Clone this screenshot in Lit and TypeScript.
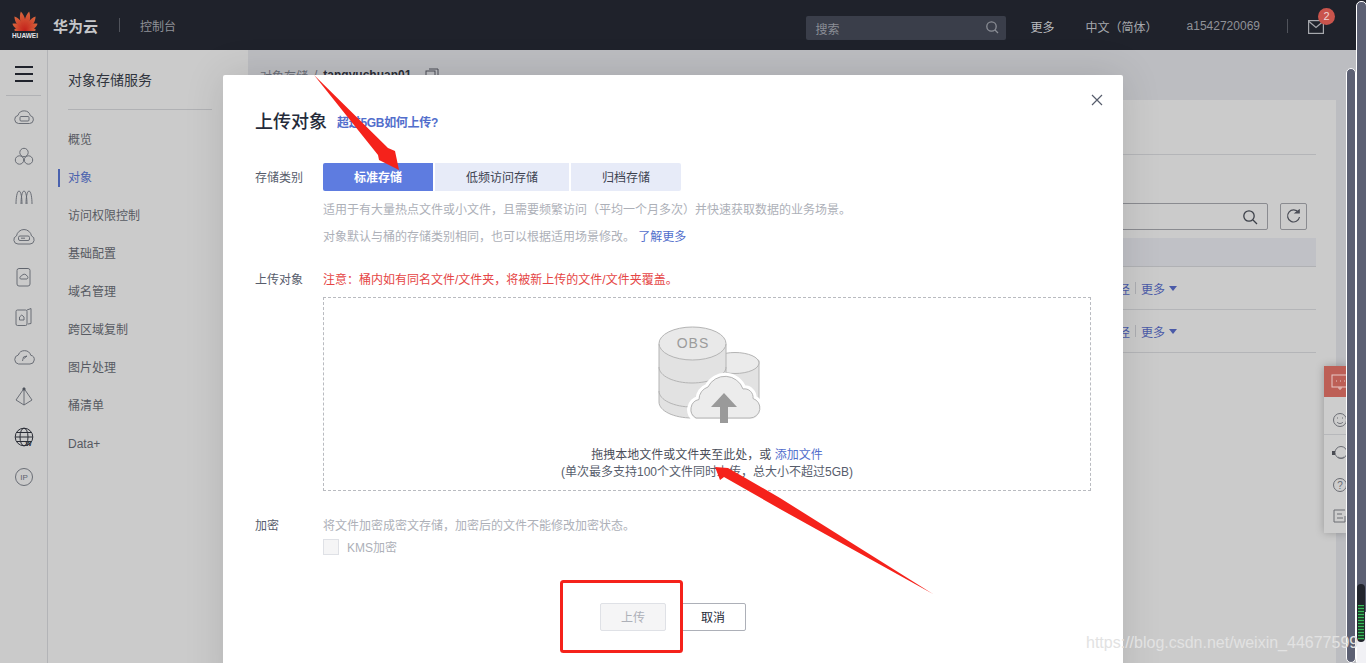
import { LitElement, html, css, svg } from "lit";
import { customElement } from "lit/decorators.js";

const petalAngles = [-84, -60, -36, -12, 12, 36, 60, 84];
const petalLens = [11, 14.5, 18, 20, 20, 18, 14.5, 11];

const railIcons = [
  svg`<path d="M6.500 18.500h11a4 4 0 0 0 .8-7.900 6.400 6.400 0 0 0-12.300-.2A4.100 4.100 0 0 0 6.500 18.500z"/><rect x="8" y="11.500" width="9" height="4.500" rx="1"/>`,
  svg`<circle cx="12" cy="7.500" r="4.200"/><circle cx="7.500" cy="15" r="4.200"/><circle cx="16.500" cy="15" r="4.200"/>`,
  svg`<path d="M4 19c0-6 1-13 3-13s3 7 3 13M9 19c0-6 1-13 3-13s3 7 3 13M14 19c0-6 1-13 3-13s3 7 3 13"/>`,
  svg`<path d="M6 19h12a4.200 4.200 0 0 0 1.500-8.100A7.600 7.600 0 0 0 4.500 10.900 4.200 4.200 0 0 0 6 19z"/><rect x="6.500" y="11" width="11" height="4.500" rx="1.500"/><path d="M9 13.200h4"/>`,
  svg`<rect x="5" y="3.500" width="13" height="17.500" rx="2"/><path d="M7.500 3.500h8M8.500 14h6.500a1.700 1.700 0 0 0 0-3 3 3 0 0 0-5.500 0 1.700 1.700 0 0 0-1 3z"/>`,
  svg`<path d="M15 5l4-1.500v15L16 19"/><rect x="4" y="5" width="11" height="15.500" rx="1.500"/><path d="M7.500 15h4.500v-3l-2.200-2-2.300 2z"/>`,
  svg`<path d="M6.500 19h11.500a4.400 4.400 0 0 0 .8-8.700 6.600 6.600 0 0 0-12.500-.3A4.600 4.600 0 0 0 6.500 19z"/><path d="M10.500 16l1-4 3.500-1-3 2.500"/>`,
  svg`<path d="M12 3.500L4 15l8 5 8-5zM12 3.500v16.500"/><circle cx="12" cy="4" r="1.200" fill="#33363f"/>`,
  svg`<g class="dark"><circle cx="12" cy="12" r="8.800"/><ellipse cx="12" cy="12" rx="4" ry="8.800"/><path d="M3.200 12h17.600M4.500 7.500h15M4.500 16.500h15"/></g><text class="w" x="16.500" y="21">W</text>`,
  svg`<circle cx="12" cy="12" r="8.500"/><text class="ip" x="12" y="15">IP</text>`,
];

const navItems = ["概览", "对象", "访问权限控制", "基础配置", "域名管理", "跨区域复制", "图片处理", "桶清单", "Data+"];

@customElement("app-root")
export class AppRoot extends LitElement {
  static styles = css`
    :host {
      display: block;
      position: relative;
      width: 1366px;
      height: 663px;
      overflow: hidden;
      font-family: "Liberation Sans", "Noto Sans CJK SC", sans-serif;
      font-size: 12px;
      color: #575d6c;
      background: #bcbdc1;
    }
    .top {
      height: 50px;
      background: #1f222b;
      display: flex;
      align-items: center;
      color: #b4b6bb;
    }
    .logo { display: flex; flex-direction: column; align-items: center; width: 26px; margin-left: 12px; margin-top: 1px; }
    .logo svg { display: block; }
    .logo span { font-size: 6.500px; line-height: 8px; color: #e4e4e6; font-weight: 700; margin-top: 1px; }
    .brand { margin-left: 15px; font-size: 15px; font-weight: 700; color: #c6c7ca; }
    .sep { width: 1px; height: 14px; background: #50535b; }
    .brand + .sep { margin-left: 21px; }
    .console { margin-left: 20px; color: #8f9197; }
    .grow { flex: 1; }
    .search {
      width: 200px; height: 24px; box-sizing: border-box; border-radius: 2px; background: #3a3e4a;
      display: flex; align-items: center; justify-content: space-between; padding: 0 7px 0 10px;
      color: #8b8e96; margin-top: 6px;
    }
    .search svg { margin-top: -3px; }
    .tn { margin-top: 2px; }
    .more { margin-left: 25px; color: #b9bbbf; }
    .lang { margin-left: 31px; color: #a6a8ad; }
    .user { margin-left: 29px; color: #8f9197; font-size: 12px; }
    .top .user + .sep { margin-left: 27px; }
    .mail { position: relative; margin: 0 42px 0 20px; width: 16px; height: 14px; margin-top: 3px; }
    .mail svg { display: block; }
    .badge {
      position: absolute; left: 10px; top: -12px; width: 17px; height: 17px; border-radius: 50%; background: #c9544c;
      color: #f0d6d4; font-size: 11px; line-height: 17px; text-align: center;
    }
    .body { display: flex; height: 613px; }
    .rail { width: 47px; border-right: 1px solid #b3b4b7; background: #cacaca; flex: none; padding-top: 10px; box-sizing: content-box; }
    .burger { display: flex; flex-direction: column; gap: 5px; width: 18px; margin: 6px auto 13px; }
    .burger i { display: block; height: 2px; background: #20232c; }
    .rail hr { margin: 0 6px 1px; border: 0; border-top: 1px solid #b0b1b4; }
    .ri { height: 40px; display: flex; align-items: center; justify-content: center; }
    .ri svg { fill: none; stroke: #5f636c; stroke-width: 0.900; width: 24px; height: 24px; }
    .ri .dark { stroke: #2b2e37; stroke-width: 1; }
    .ri text { stroke: none; text-anchor: middle; font-size: 8px; fill: #5f636c; }
    .ri text.w { font-size: 6.500px; font-weight: 700; fill: #2b2e37; }
    .side { width: 200px; flex: none; background: #cbcbcb; padding-left: 20px; box-sizing: border-box; }
    .side h2 { margin: 0; font-size: 14px; font-weight: 400; line-height: 20px; padding-top: 20px; color: #30343d; }
    .side hr { margin: 19px 36px 11px 0; border: 0; border-top: 1px solid #b0b1b4; }
    .nav { height: 38px; line-height: 38px; position: relative; color: #575a62; }
    .nav.on { color: #4a62ae; }
    .nav.on::before { content: ""; position: absolute; left: -10px; top: 10px; width: 2px; height: 18px; background: #4a62ae; }
    .main { flex: 1; min-width: 0; padding: 0 30px 0 12px; }
    .crumb { height: 50px; display: flex; align-items: center; color: #6a6d77; gap: 6px; }
    .crumb b { color: #2b2e37; }
    .crumb svg { margin-left: 8px; }
    .card { background: #cbcbcb; height: 563px; padding: 0 20px 0 0; box-sizing: border-box; }
    .tabs { height: 55px; border-bottom: 1px solid #b4b5b8; box-sizing: border-box; }
    .tools { display: flex; justify-content: flex-end; align-items: center; gap: 12px; margin-top: 48px; padding-right: 9px; }
    .find { width: 300px; height: 27px; border: 1px solid #8a8b90; border-radius: 2px; box-sizing: border-box; display: flex; align-items: center; justify-content: flex-end; padding-right: 9px; }
    .ref { width: 27px; height: 27px; border: 1px solid #8a8b90; border-radius: 2px; box-sizing: border-box; display: flex; align-items: center; justify-content: center; }
    .thead { height: 29px; margin-top: 8px; background: #c0c1c6; border-bottom: 1px solid #b0b1b4; box-sizing: border-box; }
    .row { height: 43px; border-bottom: 1px solid #b4b5b8; box-sizing: border-box; display: flex; align-items: center; justify-content: flex-end; padding-right: 139px; color: #4a5aa8; }
    .row s { text-decoration: none; width: 1px; height: 12px; background: #adaeb2; margin: 0 5px; }
    .row i { width: 0; height: 0; border: 4px solid transparent; border-top: 5px solid #4a5aa8; border-bottom: 0; margin-left: 4px; }
    .modal {
      position: absolute; left: 223px; top: 75px; width: 900px; height: 620px; background: #fff; border-radius: 2px;
      box-shadow: 0 0 40px rgba(0, 0, 0, 0.12); box-sizing: border-box; padding: 0 32px;
    }
    .close { position: absolute; right: 20px; top: 19px; display: block; }
    .mh { display: flex; align-items: center; height: 88px; box-sizing: border-box; padding-top: 2px; gap: 10px; }
    .mh h1 { margin: 0; font-size: 18px; font-weight: 500; color: #252b3a; }
    .mh a { color: #526ecc; font-weight: 700; margin-top: 2px; letter-spacing: -0.3px; }
    a { color: #526ecc; }
    .f { display: flex; }
    .l { width: 68px; flex: none; color: #575d6c; }
    .c { flex: 1; min-width: 0; }
    .f1 .l { line-height: 30px; height: 28px; }
    .segs { display: flex; gap: 2px; }
    .seg { height: 28px; line-height: 30px; text-align: center; background: #e7ebf8; color: #3d4250; width: 134px; }
    .seg.a { width: 110px; background: #5e7ce0; color: #fff; font-weight: 700; border-radius: 2px 0 0 2px; }
    .seg.z { width: 110px; border-radius: 0 2px 2px 0; }
    .d { color: #adb0b8; line-height: 18px; margin-top: 10px; }
    .d.two { margin-top: 9px; }
    .f2 { margin-top: 25px; }
    .f2 .l { line-height: 18px; }
    .warn { color: #e54545; line-height: 18px; }
    .drop { margin-top: 8px; width: 768px; height: 194px; box-sizing: border-box; border: 1px dashed #b9bbc0; text-align: center; padding-top: 23px; }
    .drop svg { display: block; margin: 0 auto; }
    .drop p { margin: 0; line-height: 17px; color: #4a4e59; }
    .drop p:first-of-type { margin-top: 20px; }
    .drop p + p { color: #575d6c; }
    .f3 { margin-top: 26px; }
    .f3 .l { line-height: 18px; }
    .f3 .d { margin-top: 0; }
    .kms { display: flex; align-items: center; gap: 8px; margin-top: 3px; color: #adb0b8; }
    .kms i { width: 16px; height: 16px; box-sizing: border-box; border: 1px solid #dfe1e6; background: #f5f5f6; }
    .foot { display: flex; gap: 14px; margin-top: 48px; padding-left: 345px; }
    .btn { width: 66px; height: 28px; box-sizing: border-box; border-radius: 2px; text-align: center; line-height: 28px; border: 1px solid #adb0b8; color: #252b3a; }
    .btn.off { background: #f5f5f6; border-color: #dfe1e6; color: #adb0b8; }
    .ink { position: absolute; left: 0; top: 0; pointer-events: none; }
    .fb { position: absolute; left: 1324px; top: 366px; width: 24px; height: 167px; background: #cdcdcd; box-shadow: 0 0 8px rgba(0, 0, 0, 0.25); overflow: hidden; }
    .fb .red { height: 31px; background: #bd5f56; display: flex; align-items: center; padding-left: 7px; }
    .fb .i { display: flex; align-items: center; padding-left: 8px; box-sizing: border-box; }
    .fb .smile { height: 38px; padding-top: 8px; border-bottom: 1px solid #b7b8bb; }
    .fb .head { height: 36px; }
    .fb .help { height: 28px; }
    .fb .note { height: 34px; }
    .fb svg { flex: none; fill: none; stroke: #6a6c73; stroke-width: 1; }
    .fb .red svg { stroke: #e8c9c5; }
    .fb .blob { fill: #4a4c53; stroke: none; }
    .fb text { stroke: none; fill: #6a6c73; font-size: 10px; text-anchor: middle; }
    .bar { position: absolute; background: #5c6073; box-sizing: border-box; border: 1px solid #fff; }
    .b1 { left: 1346px; width: 10px; top: 68px; height: 595px; border-radius: 5px; }
    .b2 { left: 1356px; width: 11px; top: 1px; height: 662px; border-radius: 5px 5px 0 0; }
    .b2top { position: absolute; left: 1357px; top: 612px; width: 9px; height: 51px; background: #f1f1f5; }
    .thumb { position: absolute; left: 1357px; top: 584px; width: 8px; height: 58px; border-radius: 4px; background: #22252d; overflow: hidden; }
    .thumb i {
      position: absolute; left: 1px; right: 1px; top: 21px; height: 35px;
      background: repeating-linear-gradient(#38b95c 0 1px, #1f4a2c 1px 3px);
    }
    .wm { position: absolute; left: 1086px; top: 634px; font-size: 16px; line-height: 18px; color: #e2e2e2; white-space: nowrap; }
  `;

  render() {
    return html`
      <div class="top">
        <div class="logo">
          <svg width="26" height="20" viewBox="-13 -20 26 20">
            <defs>
              <linearGradient id="pt" x1="0" y1="1" x2="0" y2="0"><stop offset="0" stop-color="#c4201a" /><stop offset="1" stop-color="#d9683e" /></linearGradient>
            </defs>
            ${petalAngles.map(
              (a, i) => svg`<path fill="url(#pt)" transform="rotate(${a})" d="M0 0C-3.600 -${petalLens[i] * 0.35} -3.200 -${petalLens[i] * 0.75} 0 -${petalLens[i]}C3.200 -${petalLens[i] * 0.75} 3.600 -${petalLens[i] * 0.35} 0 0z" />`,
            )}
          </svg>
          <span>HUAWEI</span>
        </div>
        <div class="brand">华为云</div>
        <div class="sep"></div>
        <div class="console">控制台</div>
        <div class="grow"></div>
        <div class="search">
          <span>搜索</span>
          <svg width="14" height="14" viewBox="0 0 14 14" fill="none" stroke="#8b8e96" stroke-width="1.300"><circle cx="6.500" cy="6.500" r="4.700" /><path d="M10 10l3 3" /></svg>
        </div>
        <div class="more tn">更多</div>
        <div class="lang tn">中文（简体）</div>
        <div class="user tn">a1542720069</div>
        <div class="sep tn"></div>
        <div class="mail">
          <svg width="16" height="14" viewBox="0 0 16 14" fill="none" stroke="#a6a8ad" stroke-width="1.200"><rect x="0.600" y="0.600" width="14.800" height="12.800" /><path d="M1 1.500l7 6 7-6" /></svg>
          <span class="badge">2</span>
        </div>
      </div>
      <div class="body">
        <div class="rail">
          <div class="burger"><i></i><i></i><i></i></div>
          <hr />
          ${railIcons.map((ic) => html`<div class="ri"><svg viewBox="0 0 24 24">${ic}</svg></div>`)}
        </div>
        <div class="side">
          <h2>对象存储服务</h2>
          <hr />
          ${navItems.map((n, i) => html`<div class="nav ${i === 1 ? "on" : ""}">${n}</div>`)}
        </div>
        <div class="main">
          <div class="crumb">
            <span>对象存储</span><span>/</span><b>tangyuchuan01</b>
            <svg width="14" height="14" viewBox="0 0 14 14" fill="none" stroke="#4a4d56"><rect x="1" y="3" width="9" height="10" /><path d="M4 1h9v9" /></svg>
          </div>
          <div class="card">
            <div class="tabs"></div>
            <div class="tools">
              <div class="find">
                <svg width="16" height="16" viewBox="0 0 16 16" fill="none" stroke="#3c4049" stroke-width="1.300"><circle cx="7" cy="7" r="5.200" /><path d="M11 11l4 4" /></svg>
              </div>
              <div class="ref">
                <svg width="15" height="15" viewBox="0 0 15 15" fill="none" stroke="#4a4d56" stroke-width="1.200"><path d="M12.500 3.500A6 6 0 1 0 13.500 8" /><path d="M9.500 3.800h3.700V1z" fill="#4a4d56" /></svg>
              </div>
            </div>
            <div class="thead"></div>
            <div class="row"><span>路径</span><s></s><span>更多</span><i></i></div>
            <div class="row"><span>路径</span><s></s><span>更多</span><i></i></div>
          </div>
        </div>
      </div>

      <div class="modal">
        <svg class="close" width="12" height="12" viewBox="0 0 12 12" stroke="#575d6c" stroke-width="1.200"><path d="M1 1l10 10M11 1L1 11" /></svg>
        <div class="mh"><h1>上传对象</h1><a>超过5GB如何上传?</a></div>
        <div class="f f1">
          <div class="l">存储类别</div>
          <div class="c">
            <div class="segs">
              <div class="seg a">标准存储</div>
              <div class="seg">低频访问存储</div>
              <div class="seg z">归档存储</div>
            </div>
            <div class="d">适用于有大量热点文件或小文件，且需要频繁访问（平均一个月多次）并快速获取数据的业务场景。</div>
            <div class="d two">对象默认与桶的存储类别相同，也可以根据适用场景修改。 <a>了解更多</a></div>
          </div>
        </div>
        <div class="f f2">
          <div class="l">上传对象</div>
          <div class="c">
            <div class="warn">注意：桶内如有同名文件/文件夹，将被新上传的文件/文件夹覆盖。</div>
            <div class="drop">
              <svg width="114" height="106" viewBox="650 321 114 106">
                <g fill="#e2e2e2" stroke="#b4b4b4" stroke-width="1">
                  <path d="M712 365v-4c0-5 47-5 47 0v42c0 8-20 12-47 10z" />
                  <ellipse cx="735" cy="363" rx="24" ry="10.500" fill="#ebebeb" />
                  <path d="M659 344v58c0 9 15 16 33 16s34-7 34-16v-58z" />
                  <path d="M659 367c0 9 15 16 33 16s34-7 34-16M659 391c0 9 15 16 33 16s34-7 34-16" fill="none" />
                  <ellipse cx="692.500" cy="343.500" rx="33.500" ry="16.500" fill="#e9e9e9" />
                </g>
                <text x="693" y="348" text-anchor="middle" font-size="14" font-weight="400" letter-spacing="1" fill="#9c9c9c" font-family="Liberation Sans, sans-serif">OBS</text>
                <path d="M696 419h54a10.500 10.500 0 0 0 3-20.500 8.500 8.500 0 0 0-10-9.500 19 19 0 0 0-35-2 13 13 0 0 0-9 12.500 10.500 10.500 0 0 0-3 19.500z" fill="#ececec" stroke="#fff" stroke-width="7" paint-order="stroke" />
                <path d="M696 418h54a10 10 0 0 0 3-19.500 8.500 8.500 0 0 0-10-9.500 19 19 0 0 0-35-2 13 13 0 0 0-9 12.500 10 10 0 0 0-3 18.500z" fill="#ececec" stroke="#b4b4b4" />
                <path d="M724 393l13 14h-9v16h-8v-16h-9z" fill="#9a9a9a" />
              </svg>
              <p>拖拽本地文件或文件夹至此处，或 <a>添加文件</a></p>
              <p>(单次最多支持100个文件同时上传，总大小不超过5GB)</p>
            </div>
          </div>
        </div>
        <div class="f f3">
          <div class="l">加密</div>
          <div class="c">
            <div class="d">将文件加密成密文存储，加密后的文件不能修改加密状态。</div>
            <div class="kms"><i></i><span>KMS加密</span></div>
          </div>
        </div>
        <div class="foot">
          <div class="btn off">上传</div>
          <div class="btn">取消</div>
        </div>
      </div>

      <div class="fb">
        <div class="red">
          <svg width="18" height="18" viewBox="0 0 18 18"><rect x="1" y="2" width="16" height="12" /><path d="M5 8h1M9 8h1M13 8h1M8 14v2h2v-2" /></svg>
        </div>
        <div class="i smile"><svg width="16" height="16" viewBox="0 0 16 16"><circle cx="8" cy="8" r="6.500" /><path d="M5 6h1M10 6h1M5 10c1.500 2 4.500 2 6 0" /></svg></div>
        <div class="i head"><svg width="16" height="16" viewBox="0 0 16 16"><circle cx="9" cy="7.500" r="6" /><rect class="blob" x="0" y="6" width="3" height="4" /><path d="M6 12c2 1.500 4 1.500 6 0" /></svg></div>
        <div class="i help"><svg width="16" height="16" viewBox="0 0 16 16"><circle cx="8" cy="8" r="6.500" /><text x="8" y="11.500">?</text></svg></div>
        <div class="i note"><svg width="16" height="16" viewBox="0 0 16 16"><path d="M13 8v6H2V2h11M5 6h5M5 10h6" /></svg></div>
      </div>

      <div class="bar b1"></div>
      <div class="bar b2"></div>
      <div class="b2top"></div>
      <div class="thumb"><i></i></div>

      <div class="wm">https://blog.csdn.net/weixin_44677599</div>

      <svg class="ink" width="1366" height="663" viewBox="0 0 1366 663">
        <rect x="561.500" y="581.500" width="120" height="70" rx="2" fill="none" stroke="#f5221b" stroke-width="3" />
        <path d="M314 75L388 148L395 151L399 170L379 160L378 155z" fill="#f5221b" />
        <path d="M933 594L780 498L728 468L715 467L720 480L724 477L780 509z" fill="#f5221b" />
      </svg>
    `;
  }
}
